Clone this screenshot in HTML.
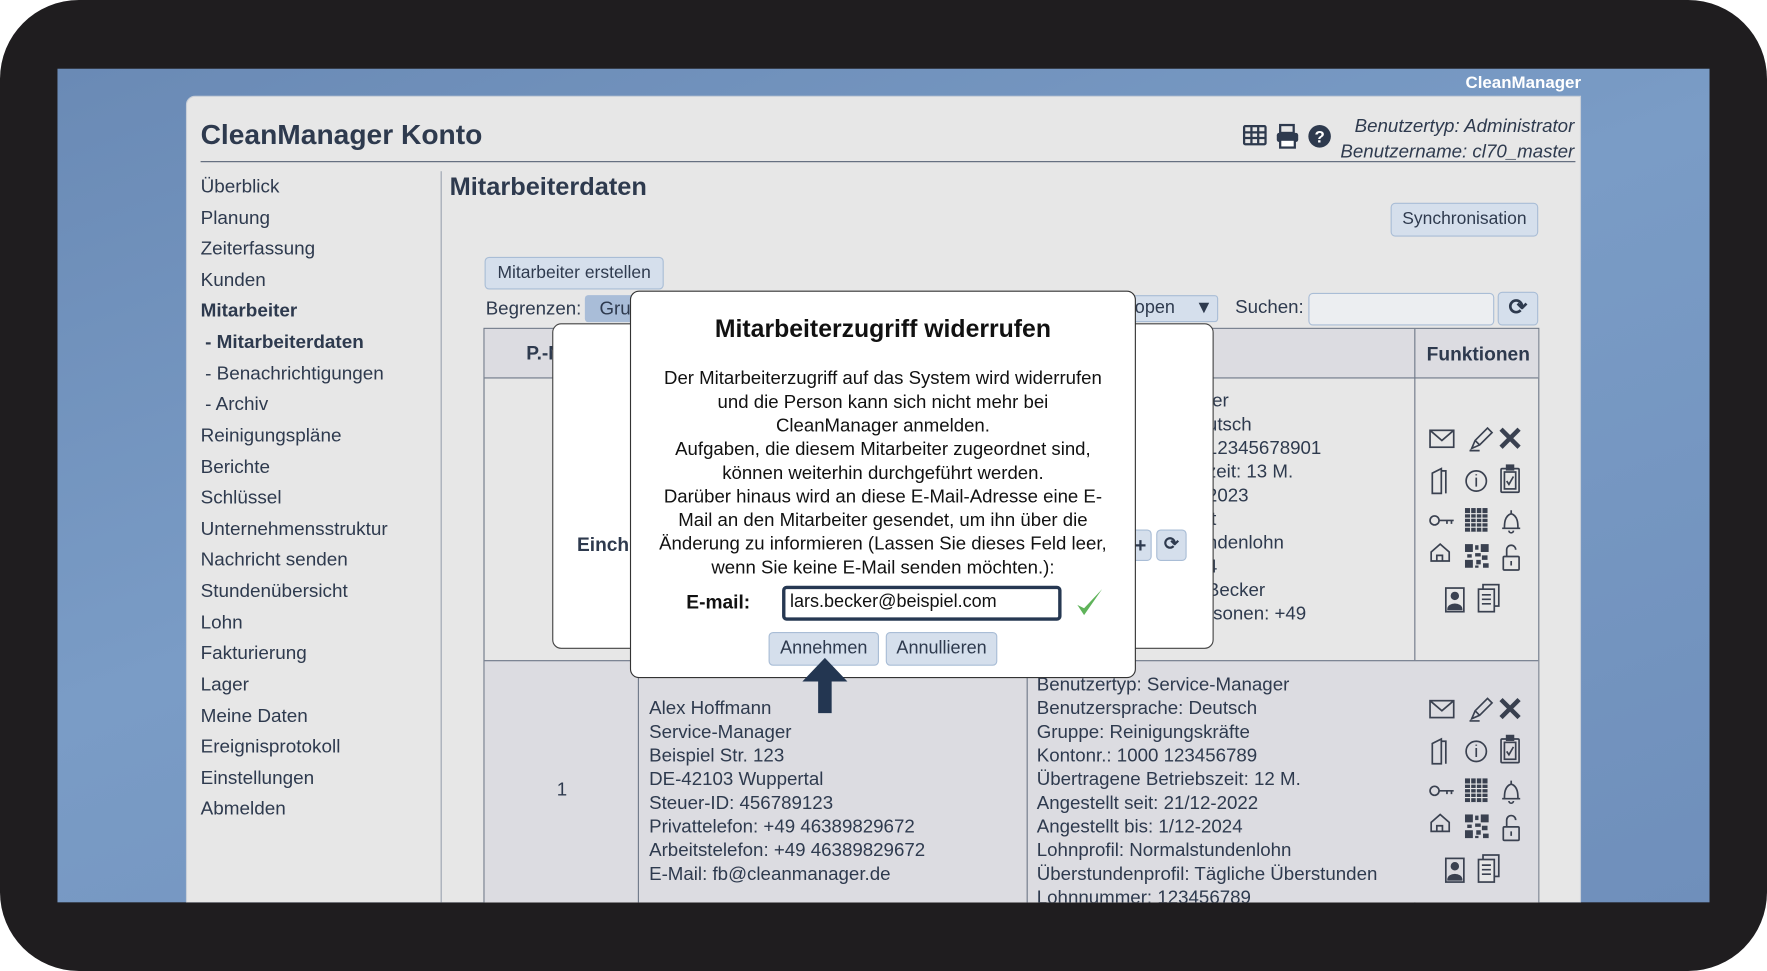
<!DOCTYPE html>
<html><head><meta charset="utf-8"><style>
*{margin:0;padding:0;box-sizing:border-box}
html,body{width:1767px;height:971px;overflow:hidden;background:#fff}
#stage{position:absolute;left:0;top:0;width:1568px;height:862px;transform:scale(1.12691,1.1265);transform-origin:0 0;font-family:"Liberation Sans",sans-serif;color:#2e3a4e}
.a{position:absolute;white-space:nowrap}
#bezel{position:absolute;left:0;top:0;width:1568px;height:862px;background:#1f1d1f;border-radius:70px}
#screen{position:absolute;left:51px;top:61px;width:1466px;height:740px;background:linear-gradient(160deg,#6a8ab5 0%,#7a9cc6 45%,#6f8fbb 100%);overflow:hidden}
#panel{position:absolute;left:114px;top:24px;width:1238px;height:760px;background:#e7e7e7;border:1px solid #c9cfd8;border-radius:8px 0 0 0}
.nav{position:absolute;left:12px;font-size:16.8px;color:#2e3a4e}
.btn{position:absolute;background:#d5dfec;border:1px solid #a9bdd6;border-radius:4px;font-size:15.5px;text-align:center;color:#2e3a4e}
.cell{position:absolute;font-size:16.6px;line-height:21px;color:#2e3a4e}
</style></head><body>
<div id="stage">
<div id="bezel"></div>
<div id="screen">
<div class="a" style="right:114px;top:4px;color:#fff;font-weight:bold;font-size:15px">CleanManager</div>
<div id="panel">
 <div class="a" style="left:12px;top:20px;font-size:25px;font-weight:bold;color:#2e3a4e">CleanManager Konto</div>
 <div class="a" style="left:12px;top:57px;width:1220px;height:1px;background:#5a6577"></div>
 <div class="a" style="right:5px;top:14px;font-style:italic;font-size:16.6px;text-align:right;line-height:23px">Benutzertyp: Administrator<br>Benutzername: cl70_master</div>
 <svg class="a" style="left:936px;top:23px" width="84" height="24" viewBox="0 0 84 24">
  <g fill="none" stroke="#2e3a4e" stroke-width="2"><rect x="2" y="3" width="19" height="16" rx="1"/><path d="M2 8.5h19M2 13.5h19M8.5 3v16M14.5 3v16"/></g>
  <g fill="#2e3a4e"><rect x="34" y="2" width="12" height="7" fill="none" stroke="#2e3a4e" stroke-width="2"/><rect x="31" y="9" width="19" height="8" rx="2"/><rect x="34" y="15" width="13" height="7" fill="#fff" stroke="#2e3a4e" stroke-width="2"/></g>
  <circle cx="69" cy="12" r="10" fill="#2e3a4e"/><text x="69" y="17.5" font-size="15" font-weight="bold" fill="#fff" text-anchor="middle" font-family="Liberation Sans">?</text>
 </svg>
 <div class="nav" style="top:70px">Überblick</div>
 <div class="nav" style="top:98px">Planung</div>
 <div class="nav" style="top:125px">Zeiterfassung</div>
 <div class="nav" style="top:153px">Kunden</div>
 <div class="nav" style="top:180px;font-weight:bold">Mitarbeiter</div>
 <div class="nav" style="top:208px;left:16px;font-weight:bold">- Mitarbeiterdaten</div>
 <div class="nav" style="top:236px;left:16px">- Benachrichtigungen</div>
 <div class="nav" style="top:263px;left:16px">- Archiv</div>
 <div class="nav" style="top:291px">Reinigungspläne</div>
 <div class="nav" style="top:319px">Berichte</div>
 <div class="nav" style="top:346px">Schlüssel</div>
 <div class="nav" style="top:374px">Unternehmensstruktur</div>
 <div class="nav" style="top:401px">Nachricht senden</div>
 <div class="nav" style="top:429px">Stundenübersicht</div>
 <div class="nav" style="top:457px">Lohn</div>
 <div class="nav" style="top:484px">Fakturierung</div>
 <div class="nav" style="top:512px">Lager</div>
 <div class="nav" style="top:540px">Meine Daten</div>
 <div class="nav" style="top:567px">Ereignisprotokoll</div>
 <div class="nav" style="top:595px">Einstellungen</div>
 <div class="nav" style="top:622px">Abmelden</div>
 <div class="a" style="left:225px;top:66px;width:1px;height:700px;background:#9aa3b0"></div>
 <div class="a" style="left:233px;top:67px;font-size:22.5px;font-weight:bold">Mitarbeiterdaten</div>
 <div class="btn" style="left:1068px;top:94px;width:131px;height:30px;line-height:28px">Synchronisation</div>
 <div class="btn" style="left:264px;top:142px;width:159px;height:29px;line-height:27px">Mitarbeiter erstellen</div>
 <div class="a" style="left:265px;top:178px;font-size:16.6px">Begrenzen:</div>
 <div class="a" style="left:353px;top:176px;width:60px;height:24px;background:#a9bdd8;border-radius:3px;font-size:16.6px;padding:2px 0 0 13px">Gru</div>
 <div class="a" style="left:830px;top:176px;width:85px;height:24px;background:#d5dfec;border:1px solid #a9bdd6;border-radius:3px;font-size:16px;padding:2px 0 0 10px">open &nbsp;&nbsp;&nbsp;▼</div>
 <div class="a" style="left:930px;top:177px;font-size:16.6px">Suchen:</div>
 <div class="a" style="left:995px;top:174px;width:165px;height:29px;background:#eceef1;border:1px solid #a9bdd6;border-radius:4px"></div>
 <div class="btn" style="left:1163px;top:173px;width:36px;height:30px;font-size:20px;font-weight:bold;line-height:27px">⟳</div>
 <div class="a" style="left:263px;top:205px;width:937px;height:560px;border:1px solid #6f7888;background:#e7e7e7"></div>
 <div class="a" style="left:264px;top:206px;width:935px;height:44px;background:#dcdce1;border-bottom:1px solid #6f7888"></div>
 <div class="a" style="left:301px;top:218px;font-size:17px;font-weight:bold">P.-N</div>
 <div class="a" style="left:1089px;top:206px;width:1px;height:560px;background:#6f7888"></div>
 <div class="a" style="left:1100px;top:219px;font-size:17px;font-weight:bold">Funktionen</div>
 <div class="a" style="left:264px;top:500px;width:935px;height:260px;background:#dcdce1;border-top:1px solid #6f7888"></div>
 <div class="a" style="left:400px;top:500px;width:1px;height:260px;background:#6f7888"></div>
 <div class="a" style="left:745px;top:500px;width:1px;height:260px;background:#6f7888"></div>
 <div class="cell" style="left:905px;top:259px">ter<br>utsch<br>12345678901<br>zeit: 13 M.<br>2023<br>it<br>ndenlohn<br>4<br>Becker<br>rsonen: +49</div>
 <div class="cell" style="left:328px;top:604px">1</div>
 <div class="cell" style="left:410px;top:532px">Alex Hoffmann<br>Service-Manager<br>Beispiel Str. 123<br>DE-42103 Wuppertal<br>Steuer-ID: 456789123<br>Privattelefon: +49 46389829672<br>Arbeitstelefon: +49 46389829672<br>E-Mail: fb@cleanmanager.de</div>
 <div class="cell" style="left:754px;top:511px">Benutzertyp: Service-Manager<br>Benutzersprache: Deutsch<br>Gruppe: Reinigungskräfte<br>Kontonr.: 1000 123456789<br>Übertragene Betriebszeit: 12 M.<br>Angestellt seit: 21/12-2022<br>Angestellt bis: 1/12-2024<br>Lohnprofil: Normalstundenlohn<br>Überstundenprofil: Tägliche Überstunden<br>Lohnnummer: 123456789</div>
 <svg class="a" style="left:1098px;top:290px" width="100" height="170" viewBox="0 0 100 170">
  <g id="icg" fill="none" stroke="#3a4150" stroke-width="1.5">
   <rect x="5" y="6" width="21" height="15"/><path d="M5 6l10.5 9L26 6"/>
   <path d="M42 22l3-7 11-11 4 4-11 11z M45 15l4 4 M40 24h9"/>
   <path d="M68 5l16 16M84 5L68 21" stroke-width="4"/>
   <path d="M7 44l8-4v22H7z M15 42h4v20"/>
   <circle cx="46" cy="51" r="9"/><path d="M46 48v8M46 45v1"/>
   <rect x="68" y="40" width="16" height="21" rx="1"/><rect x="71" y="43" width="10" height="15"/><path d="M73 51l2 3 4-7"/><rect x="73" y="37" width="6" height="4" fill="#3a4150"/>
   <circle cx="9" cy="86" r="4"/><path d="M13 86h13M20 86v3M24 86v3"/>
   <rect x="36" y="75" width="20" height="21" fill="#3a4150" stroke="none"/><path d="M36 80h20M36 84h20M36 88h20M36 92h20M41 75v21M46 75v21M51 75v21" stroke="#e7e7e7" stroke-width="1"/>
   <path d="M69 93h16M71 93c0-4 0-11 6-13 6 2 6 9 6 13M75 95a2 2 0 0 0 4 0M77 77v3"/>
   <path d="M6 122v-8l8-7 8 7v8zM11 122v-5h5v5"/>
   <g fill="#3a4150" stroke="none"><rect x="36" y="107" width="7" height="7"/><rect x="50" y="107" width="7" height="7"/><rect x="36" y="121" width="7" height="7"/><rect x="45" y="108" width="3" height="4"/><rect x="45" y="115" width="5" height="3"/><rect x="38" y="116" width="4" height="3"/><rect x="51" y="117" width="5" height="4"/><rect x="46" y="121" width="4" height="4"/><rect x="52" y="124" width="5" height="4"/><rect x="45" y="126" width="3" height="2"/></g>
   <rect x="70" y="118" width="14" height="12" rx="1"/><path d="M73 118v-6a4 4 0 0 1 8 0M77 122v4"/>
   <rect x="19" y="146" width="16" height="21"/><circle cx="27" cy="153" r="3" fill="#3a4150"/><path d="M21 165c0-6 12-6 12 0z" fill="#3a4150"/>
   <rect x="52" y="143" width="14" height="19"/><rect x="48" y="147" width="14" height="20" fill="#e7e7e7"/><path d="M51 152h8M51 156h8M51 160h8"/>
  </g>
 </svg>
 <svg class="a" style="left:1098px;top:530px" width="100" height="170" viewBox="0 0 100 170"><use href="#icg"/></svg>
 <div class="a" style="left:324px;top:201px;width:587px;height:289px;background:#fff;border:1px solid #444;border-radius:8px"></div>
 <div class="a" style="left:346px;top:388px;font-size:17px;font-weight:bold">Einch</div>
 <div class="btn" style="left:836px;top:384px;width:20px;height:28px;font-weight:bold;font-size:18px;line-height:26px">+</div>
 <div class="btn" style="left:860px;top:384px;width:27px;height:28px;font-weight:bold;font-size:16px;line-height:26px">⟳</div>
 <div class="a" style="left:393px;top:172px;width:449px;height:344px;background:#fff;border:1px solid #333;border-radius:8px;color:#111">
  <div style="position:absolute;left:0;width:100%;top:20px;text-align:center;font-size:22px;font-weight:bold;color:#111">Mitarbeiterzugriff widerrufen</div>
  <div style="position:absolute;left:0;width:100%;top:67px;text-align:center;font-size:16.5px;line-height:21px;color:#111">Der Mitarbeiterzugriff auf das System wird widerrufen<br>und die Person kann sich nicht mehr bei<br>CleanManager anmelden.<br>Aufgaben, die diesem Mitarbeiter zugeordnet sind,<br>können weiterhin durchgeführt werden.<br>Darüber hinaus wird an diese E-Mail-Adresse eine E-<br>Mail an den Mitarbeiter gesendet, um ihn über die<br>Änderung zu informieren (Lassen Sie dieses Feld leer,<br>wenn Sie keine E-Mail senden möchten.):</div>
  <div style="position:absolute;left:49px;top:266px;font-size:17px;font-weight:bold">E-mail:</div>
  <div style="position:absolute;left:134px;top:261px;width:248px;height:31px;border:3px solid #263852;border-radius:4px;font-size:16px;padding:3px 0 0 4px">lars.becker@beispiel.com</div>
  <svg style="position:absolute;left:394px;top:262px" width="26" height="28" viewBox="0 0 26 28"><path d="M2 16l6 9L24 2 8 19z" fill="#5fb35a"/></svg>
  <div class="btn" style="left:122px;top:302px;width:98px;height:30px;line-height:28px;font-size:16px">Annehmen</div>
  <div class="btn" style="left:226px;top:302px;width:99px;height:30px;line-height:28px;font-size:16px">Annullieren</div>
 </div>
 <svg class="a" style="left:544px;top:497px" width="44" height="52" viewBox="0 0 44 52"><path d="M22 1L42 22H28V50H16V22H2z" fill="#233651"/></svg>
</div>
</div>
</div>
</body></html>
